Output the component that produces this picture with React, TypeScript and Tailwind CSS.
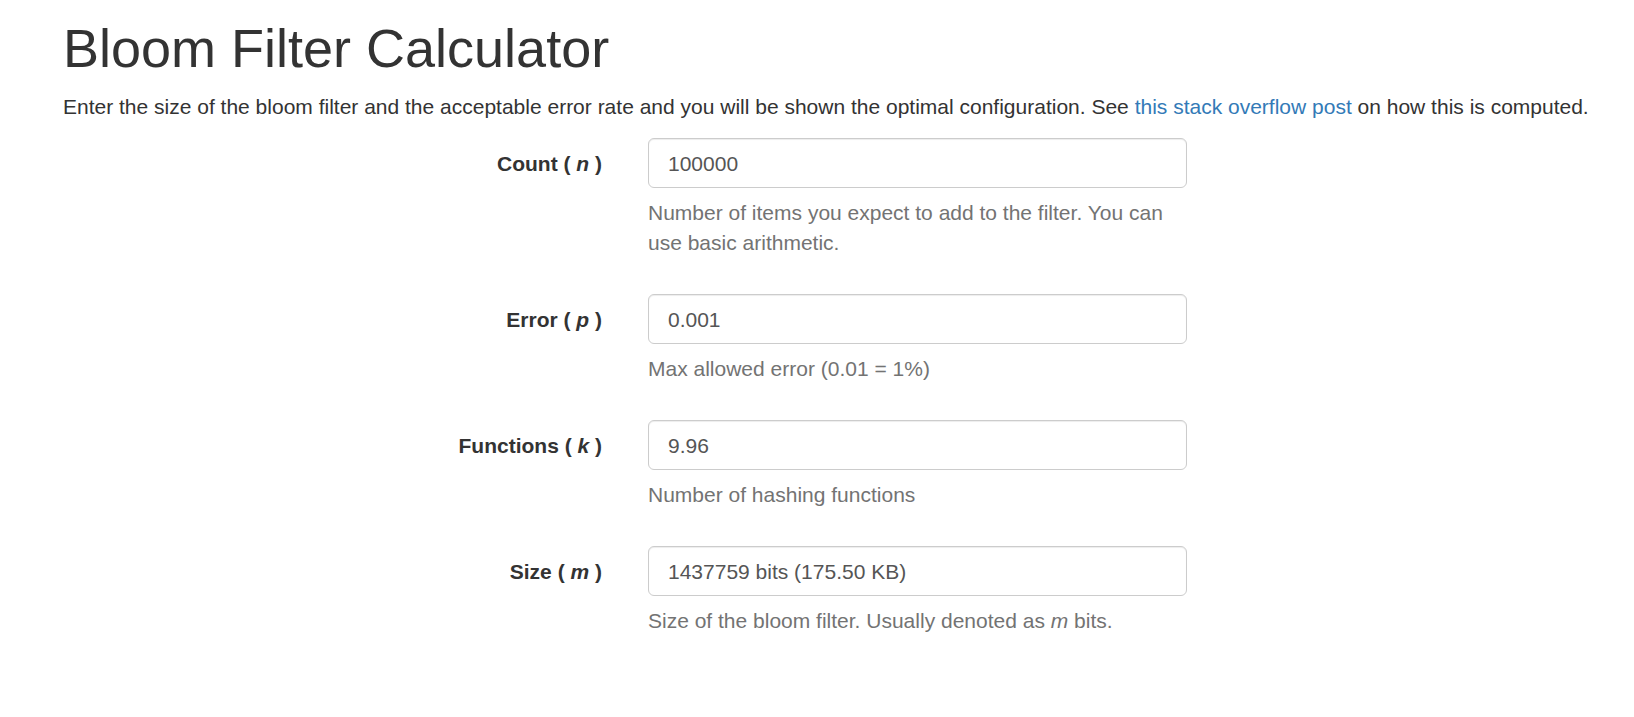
import React from "react";

const fields = [
  {
    label: "Count",
    sym: "n",
    value: "100000",
    help: <>Number of items you expect to add to the filter. You can use basic arithmetic.</>,
  },
  { label: "Error", sym: "p", value: "0.001", help: <>Max allowed error (0.01 = 1%)</> },
  { label: "Functions", sym: "k", value: "9.96", help: <>Number of hashing functions</> },
  {
    label: "Size",
    sym: "m",
    value: "1437759 bits (175.50 KB)",
    help: (
      <>
        Size of the bloom filter. Usually denoted as <i>m</i> bits.
      </>
    ),
  },
];

export default function App() {
  return (
    <div
      className="min-h-[717px] bg-white text-[#333] pl-[63px] pt-[19px]"
      style={{ fontFamily: '"Liberation Sans", Arial, Helvetica, sans-serif' }}
    >
      {/* Header */}
      <h1 className="text-[54px] leading-[1.1] font-normal m-0">Bloom Filter Calculator</h1>
      <p className="text-[21px] leading-[30px] mt-[14px] mb-[16px] whitespace-nowrap">
        Enter the size of the bloom filter and the acceptable error rate and you will be shown the optimal
        configuration. See{" "}
        <a href="#" className="text-[#337ab7] no-underline">
          this stack overflow post
        </a>{" "}
        on how this is computed.
      </p>

      {/* Form */}
      <form className="flex flex-col">
        {fields.map((f) => (
          <div key={f.label} className="flex items-start mb-[36px]">
            <label className="w-[539px] shrink-0 text-right text-[21px] font-bold leading-[30px] pt-[11px]">
              {f.label} ( <i>{f.sym}</i> )
            </label>
            <div className="ml-[46px] w-[539px] shrink-0">
              <input
                readOnly
                value={f.value}
                className="block w-full h-[50px] pl-[19px] pr-[18px] pt-[1px] text-[21px] text-[#555] bg-white border border-[#ccc] rounded-[6px] shadow-[inset_0_1px_1px_rgba(0,0,0,0.075)] outline-none"
                style={{ fontFamily: '"Liberation Sans", Arial, Helvetica, sans-serif' }}
              />
              <p className="mt-[10px] text-[21px] leading-[30px] text-[#737373]">{f.help}</p>
            </div>
          </div>
        ))}
      </form>
    </div>
  );
}
